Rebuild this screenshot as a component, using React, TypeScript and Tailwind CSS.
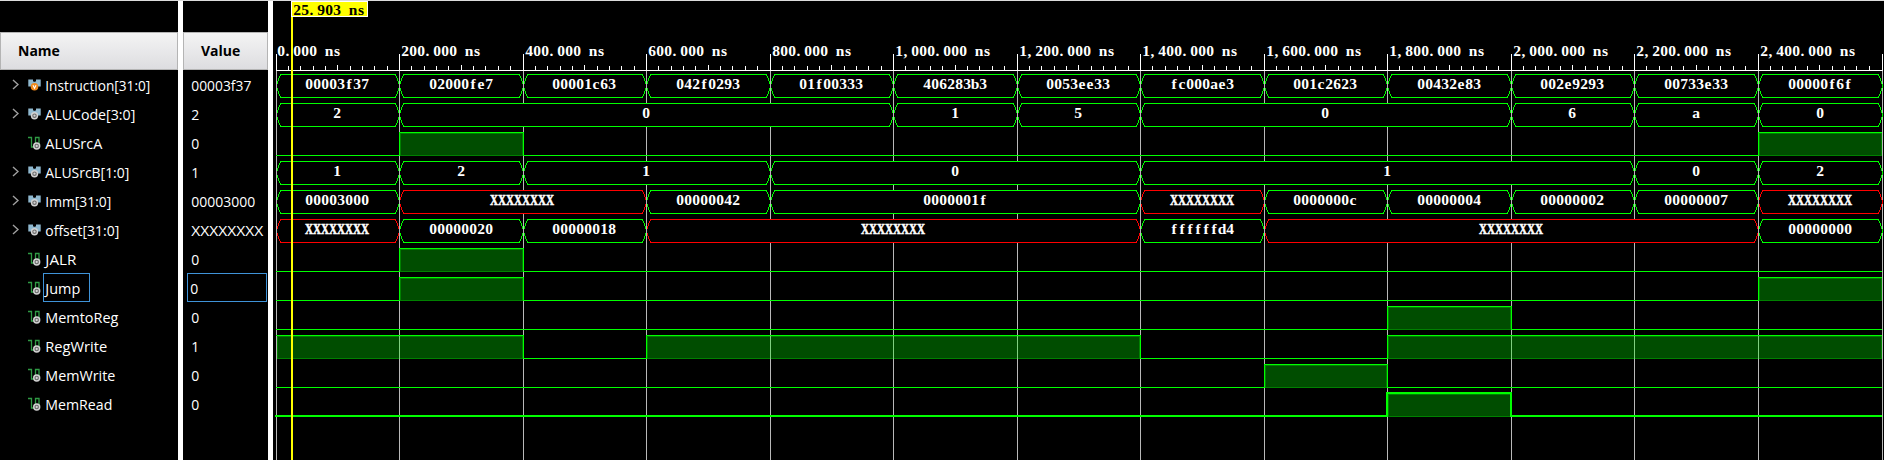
import React from "react";

type Seg = [number, number, string];
type Signal = {
  name: string;
  value: string;
  nameWidth: number;
  valueWidth: number;
  bus?: Seg[];
  high?: [number, number][];
  input?: boolean;
  selected?: boolean;
  bold?: boolean;
};

const X8 = "XXXXXXXX";

const signals: Signal[] = [
  {
    name: "Instruction[31:0]", value: "00003f37", nameWidth: 105, valueWidth: 60, input: true,
    bus: ["00003f37", "02000fe7", "00001c63", "042f0293", "01f00333", "406283b3", "0053ee33", "fc000ae3", "001c2623", "00432e83", "002e9293", "00733e33", "00000f6f"].map(
      (v, i) => [i, i + 1, v] as Seg,
    ),
  },
  {
    name: "ALUCode[3:0]", value: "2", nameWidth: 90, valueWidth: 8,
    bus: [[0, 1, "2"], [1, 5, "0"], [5, 6, "1"], [6, 7, "5"], [7, 10, "0"], [10, 11, "6"], [11, 12, "a"], [12, 13, "0"]],
  },
  { name: "ALUSrcA", value: "0", nameWidth: 57, valueWidth: 8, high: [[1, 2], [12, 13]] },
  {
    name: "ALUSrcB[1:0]", value: "1", nameWidth: 84, valueWidth: 8,
    bus: [[0, 1, "1"], [1, 2, "2"], [2, 4, "1"], [4, 7, "0"], [7, 11, "1"], [11, 12, "0"], [12, 13, "2"]],
  },
  {
    name: "Imm[31:0]", value: "00003000", nameWidth: 66, valueWidth: 64,
    bus: [[0, 1, "00003000"], [1, 3, X8], [3, 4, "00000042"], [4, 7, "0000001f"], [7, 8, X8], [8, 9, "0000000c"], [9, 10, "00000004"], [10, 11, "00000002"], [11, 12, "00000007"], [12, 13, X8]],
  },
  {
    name: "offset[31:0]", value: X8, nameWidth: 74, valueWidth: 72,
    bus: [[0, 1, X8], [1, 2, "00000020"], [2, 3, "00000018"], [3, 7, X8], [7, 8, "ffffffd4"], [8, 12, X8], [12, 13, "00000000"]],
  },
  { name: "JALR", value: "0", nameWidth: 31, valueWidth: 8, high: [[1, 2]] },
  { name: "Jump", value: "0", nameWidth: 35, valueWidth: 8, high: [[1, 2], [12, 13]], selected: true },
  { name: "MemtoReg", value: "0", nameWidth: 73, valueWidth: 8, high: [[9, 10]] },
  { name: "RegWrite", value: "1", nameWidth: 62, valueWidth: 8, high: [[0, 2], [3, 7], [9, 13]] },
  { name: "MemWrite", value: "0", nameWidth: 70, valueWidth: 8, high: [[8, 9]] },
  { name: "MemRead", value: "0", nameWidth: 67, valueWidth: 8, high: [[9, 10]], bold: true },
];

const ORIGIN = 3;
const END = 13;
const gx = (k: number) => (k === END ? 1609 : ORIGIN + Math.floor(k * 123.5));
const rowTop = (i: number) => 74 + 29 * i;

function Label({ text, width }: { text: string; width: number }) {
  return (
    <svg width={width + 2} height="25" className="block overflow-visible">
      <text x="0.3" y="18.5" textLength={width} lengthAdjust="spacingAndGlyphs" fontSize="15" className="fill-white font-['Open_Sans',sans-serif]">
        {text}
      </text>
    </svg>
  );
}

/* Fixed pitch text: every character is centred in an 8px cell. */
function Mono({ x, y, text, className = "fill-white" }: { x: number; y: number; text: string; className?: string }) {
  if (text === X8) {
    return (
      <text x={x} y={y} textLength={64} lengthAdjust="spacingAndGlyphs" fontSize="15.5" strokeWidth="0.6" className="fill-white stroke-white font-['Liberation_Serif',serif] font-bold">
        {text}
      </text>
    );
  }
  const xs = text.split("").map((c, i) => x + i * 8 + (c === "." || c === "," ? 2.5 : 4)).join(" ");
  return (
    <text x={xs} y={y} textAnchor="middle" fontSize="15.5" className={className + " font-['Liberation_Serif',serif] font-bold"}>
      {text}
    </text>
  );
}

function BusIcon({ input }: { input?: boolean }) {
  return (
    <svg width="14" height="14" viewBox="0 0 14 14" className="block">
      <path d="M0.3 1.5H5v2h3v-2h4.7V8.5H0.3z" fill="#8fb8cf" />
      <path d="M4.8 1h3.4L6.5 4z" fill="#000" />
      {input ? (
        <>
          <circle cx="6.5" cy="8.7" r="3.8" fill="#f0891c" />
          <path d="M5 7.2l1.5 3 1.5-3" stroke="#fff" strokeWidth="1.1" fill="none" />
        </>
      ) : (
        <>
          <circle cx="6.5" cy="8.7" r="3.7" fill="#d2d2d2" />
          <circle cx="6.5" cy="8.7" r="1.7" fill="#d2d2d2" stroke="#6a6a6a" strokeWidth="1.1" />
        </>
      )}
    </svg>
  );
}

function WireIcon() {
  return (
    <svg width="14" height="14" viewBox="0 0 14 14" className="block">
      <path d="M0 1.5h3.5v9.5H7.5v-9.5h3.5V8" stroke="#2f9a44" strokeWidth="1.3" fill="none" />
      <circle cx="8.7" cy="10" r="3.7" fill="#d2d2d2" />
      <circle cx="8.7" cy="10" r="1.7" fill="#d2d2d2" stroke="#6a6a6a" strokeWidth="1.1" />
    </svg>
  );
}

function BusRow({ segs, top }: { segs: Seg[]; top: number }) {
  return (
    <g>
      {segs.map(([a, b, v]) => {
        const l = gx(a) + 0.5;
        const r = gx(b) + 0.5;
        const t = top + 0.5;
        const m = top + 12;
        const e = top + 23.5;
        const textX = Math.floor((gx(a) + gx(b)) / 2 - v.length * 4);
        return (
          <g key={a}>
            <path
              d={`M${l} ${m}L${l + 1} ${m - 4}L${l + 4} ${t}H${r - 4}L${r - 1} ${m - 4}L${r} ${m}L${r - 1} ${m + 4}L${r - 4} ${e}H${l + 4}L${l + 1} ${m + 4}Z`}
              fill="#000"
              stroke={v === X8 ? "#f00" : "#0f0"}
              strokeWidth="1"
              shapeRendering="crispEdges"
            />
            <Mono x={textX} y={top + 15} text={v} />
          </g>
        );
      })}
      {segs.map(([a]) => (
        <rect key={a} x={gx(a)} y={top} width="1" height="24" fill="#b9b9b9" shapeRendering="crispEdges" />
      ))}
    </g>
  );
}

function WireRow({ high, top, bold }: { high: [number, number][]; top: number; bold?: boolean }) {
  const low = top + 23;
  const w = bold ? 2 : 1;
  const o = bold ? 0 : 0.5;
  let d = high[0][0] === 0 ? `M${gx(0)} ${top + o}` : `M${gx(0) - (bold ? 1 : 0)} ${low + o}`;
  high.forEach(([a, b]) => {
    if (a !== 0) d += `H${gx(a) + o}V${top + o}`;
    d += b === END ? `H${gx(b)}` : `H${gx(b) + o}V${low + o}`;
  });
  if (high[high.length - 1][1] !== END) d += `H${gx(END)}`;
  return (
    <g shapeRendering="crispEdges">
      {high.map(([a, b]) => (
        <g key={a}>
          <rect x={gx(a) + 1} y={top + 1} width={gx(b) - gx(a) - 1} height="23" fill="#004d00" />
          <rect x={gx(a) + 1.5} y={top + 1.5} width={gx(b) - gx(a) - 2} height="22" fill="none" stroke="#008000" />
          {Array.from({ length: b - a - 1 }, (_, i) => (
            <rect key={i} x={gx(a + i + 1)} y={top + 1} width="1" height="23" fill="#80d080" />
          ))}
        </g>
      ))}
      <path d={d} fill="none" stroke="#0f0" strokeWidth={w} />
    </g>
  );
}

function Waves() {
  const ticks: React.ReactNode[] = [];
  for (let k = 0; k < END; k++) {
    for (let j = 1; j < 10; j++) {
      const x = ORIGIN + Math.floor((k + j / 10) * 123.5);
      ticks.push(<rect key={`${k}-${j}`} x={x} y={j === 5 ? 65 : 66} width="1" height="5" fill="#fff" />);
    }
  }
  return (
    <svg width="1611" height="460" className="block">
      <g shapeRendering="crispEdges">
        {ticks}
        {Array.from({ length: END + 1 }, (_, k) => (
          <g key={k}>
            <rect x={gx(k)} y="71" width="1" height="389" fill="#b9b9b9" />
            <rect x={gx(k)} y="54" width="1" height="17" fill="#fff" />
          </g>
        ))}
        <rect x={ORIGIN} y="70" width="1607" height="1" fill="#fff" />
      </g>
      {Array.from({ length: END }, (_, k) => (
        <Mono key={k} x={gx(k) + (k ? 2 : 1)} y={56} text={(k * 200).toLocaleString("en-US") + ".000 ns"} />
      ))}
      {signals.map((s, i) =>
        s.bus ? <BusRow key={s.name} segs={s.bus} top={rowTop(i)} /> : <WireRow key={s.name} high={s.high!} top={rowTop(i)} bold={s.bold} />,
      )}
      <g shapeRendering="crispEdges">
        <rect x="18" y="16" width="2" height="444" fill="#ff0" />
        <rect x="18" y="1" width="77" height="16" fill="#fff" />
        <rect x="19" y="2" width="75" height="14" fill="#ff0" />
      </g>
      <Mono x={20} y={15} text="25.903 ns" className="fill-black" />
    </svg>
  );
}

function Header({ title, className }: { title: string; className: string }) {
  return (
    <div className={"mt-[31px] flex h-[38px] items-center border border-[#b4b4b4] bg-linear-to-b from-[#f4f4f4] to-[#dddde0] pb-[1px] font-['Open_Sans',sans-serif] text-[14px] font-bold text-black " + className}>
      {title}
    </div>
  );
}

export default function App() {
  return (
    <div className="flex h-[460px] w-[1884px] overflow-hidden border-t border-[#dcdcdc] bg-black">
      <div className="w-[178px] shrink-0">
        <Header title="Name" className="pl-[17px]" />
        <div>
          {signals.map((s) => (
            <div key={s.name} className="flex h-[29px] items-center">
              <div className="flex w-[28px] justify-end pr-[9px]">
                {s.bus && (
                  <svg width="7" height="11" viewBox="0 0 7 11">
                    <path d="M1 1l5 4.5L1 10" fill="none" stroke="#a0a0a0" strokeWidth="1.4" />
                  </svg>
                )}
              </div>
              {s.bus ? <BusIcon input={s.input} /> : <WireIcon />}
              <div className={s.selected ? "ml-[1px] flex h-[29px] w-[47px] items-center border border-[#3f93d8] pl-[1px]" : "flex pl-[3px]"}>
                <Label text={s.name} width={s.nameWidth} />
              </div>
            </div>
          ))}
        </div>
      </div>
      <div className="w-[5px] shrink-0 bg-white" />
      <div className="w-[85px] shrink-0">
        <Header title="Value" className="pl-[17px]" />
        <div>
          {signals.map((s) => (
            <div
              key={s.name}
              className={s.selected ? "ml-[4px] flex h-[29px] w-[80px] items-center border border-[#3f93d8] pl-[2px]" : "flex h-[29px] items-center pl-[8px]"}
            >
              <Label text={s.value} width={s.valueWidth} />
            </div>
          ))}
        </div>
      </div>
      <div className="w-[5px] shrink-0 bg-white" />
      <div className="-mt-px w-[1611px] shrink-0">
        <Waves />
      </div>
    </div>
  );
}
